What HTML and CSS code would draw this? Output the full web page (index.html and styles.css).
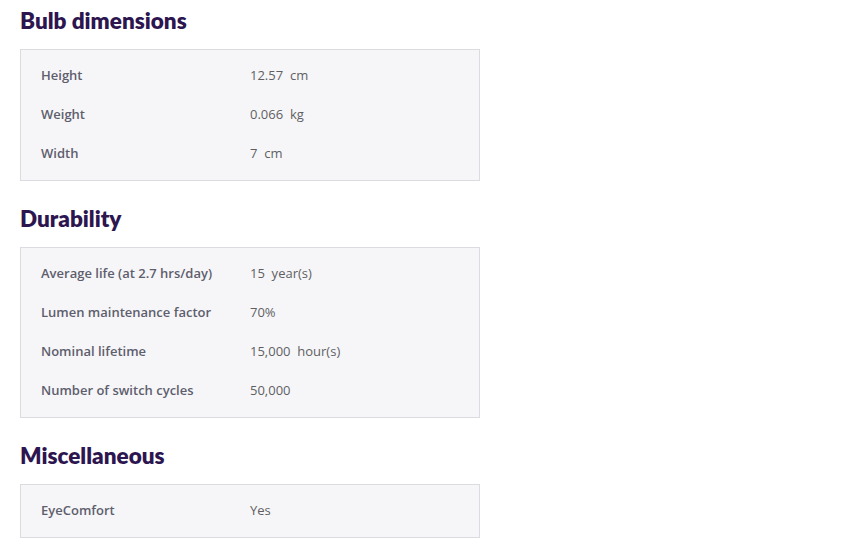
FILE: index.html
```html
<!DOCTYPE html>
<html lang="en">
<head>
<meta charset="utf-8">
<title>Specifications</title>
<link rel="stylesheet" href="styles.css">
</head>
<body>
<div class="specs">
  <section class="group">
    <h2 class="group-title">Bulb dimensions</h2>
    <div class="table">
      <div class="row"><span class="label">Height</span><span class="value">12.57&nbsp; cm</span></div>
      <div class="row"><span class="label">Weight</span><span class="value">0.066&nbsp; kg</span></div>
      <div class="row"><span class="label">Width</span><span class="value">7&nbsp; cm</span></div>
    </div>
  </section>
  <section class="group">
    <h2 class="group-title">Durability</h2>
    <div class="table">
      <div class="row"><span class="label">Average life (at 2.7 hrs/day)</span><span class="value">15&nbsp; year(s)</span></div>
      <div class="row"><span class="label">Lumen maintenance factor</span><span class="value">70%</span></div>
      <div class="row"><span class="label">Nominal lifetime</span><span class="value">15,000&nbsp; hour(s)</span></div>
      <div class="row"><span class="label">Number of switch cycles</span><span class="value">50,000</span></div>
    </div>
  </section>
  <section class="group">
    <h2 class="group-title">Miscellaneous</h2>
    <div class="table">
      <div class="row"><span class="label">EyeComfort</span><span class="value">Yes</span></div>
    </div>
  </section>
</div>
</body>
</html>
```
FILE: styles.css
```css
html, body {
  margin: 0;
  padding: 0;
  background: #ffffff;
}
body {
  font-family: "Open Sans", Lato, "Liberation Sans", sans-serif;
}
.specs {
  width: 460px;
  padding: 7px 0 0 20px;
}
.group {
  margin-bottom: 24px;
}
.group-title {
  margin: 0 0 14px;
  font-family: Lato, "Open Sans", sans-serif;
  font-size: 22.5px;
  line-height: 28px;
  font-weight: 800;
  color: #2d1650;
}
.table {
  background: #f6f6f8;
  border: 1px solid #dcdce0;
  padding: 5px 20px 8px;
}
.row {
  display: grid;
  grid-template-columns: 209px 1fr;
  height: 39px;
  align-items: center;
  font-size: 13px;
}
.label {
  font-weight: 600;
  color: #5e5e6e;
}
.value {
  color: #5f5f63;
}
```
